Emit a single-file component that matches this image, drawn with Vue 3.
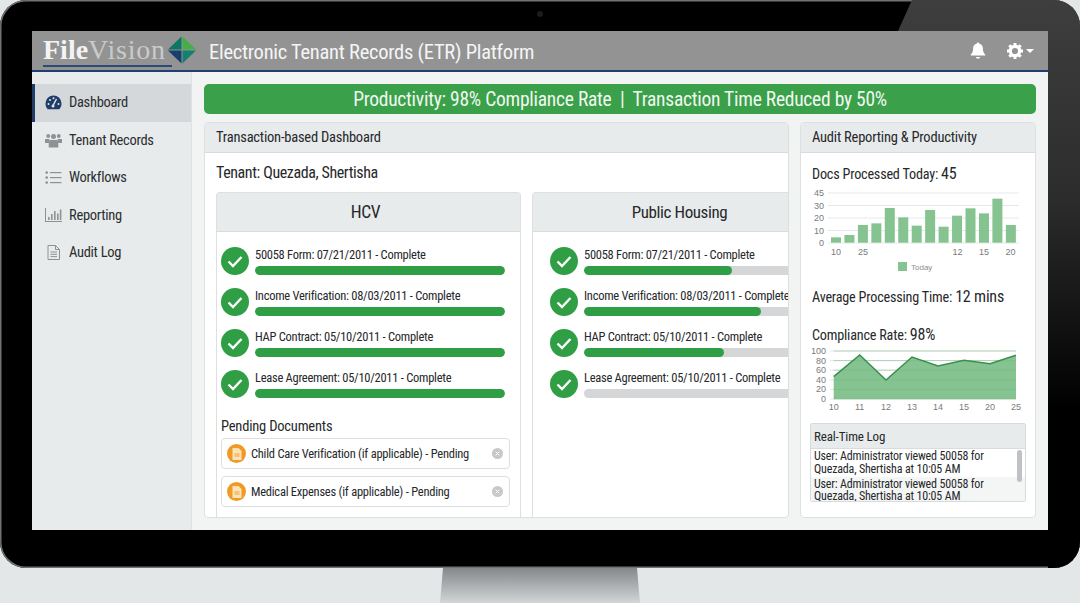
<script setup>
const navItems = [
  { label: 'Dashboard', icon: 'gauge', active: true },
  { label: 'Tenant Records', icon: 'users' },
  { label: 'Workflows', icon: 'list' },
  { label: 'Reporting', icon: 'chart' },
  { label: 'Audit Log', icon: 'doc' },
]
const docs = [
  { label: '50058 Form: 07/21/2011 - Complete', hcv: 100, ph: 58.700 },
  { label: 'Income Verification: 08/03/2011 - Complete', hcv: 100, ph: 70.200 },
  { label: 'HAP Contract: 05/10/2011 - Complete', hcv: 100, ph: 55.600 },
  { label: 'Lease Agreement: 05/10/2011 - Complete', hcv: 100, ph: 0 },
]
const hcvRows = docs.map((d) => ({ label: d.label, pct: d.hcv }))
const phRows = docs.map((d) => ({ label: d.label, pct: d.ph }))
const pending = ['Child Care Verification (if applicable) - Pending', 'Medical Expenses (if applicable) - Pending']
const barTops = [352, 345, 315, 310, 264, 292, 317, 270, 320, 287, 265, 280, 236, 315]
const bars = barTops.map((t, i) => {
  const top = 120 + t / 3 - 188
  return { x: 19 + i * 13.45, y: top, h: 54.7 - top }
})
const barGrid = [{ y: 5, l: '45' }, { y: 17.5, l: '30' }, { y: 30, l: '20' }, { y: 42.5, l: '10' }, { y: 55, l: '0' }]
const barX = [{ x: 24, l: '10' }, { x: 51, l: '25' }, { x: 145.5, l: '12' }, { x: 172, l: '15' }, { x: 198.5, l: '20' }]
const linePts = [[21.7, 29.7], [47.7, 8], [74, 33], [100, 10], [126, 19], [152, 13.3], [178, 16.7], [204, 8.3]]
const line = linePts.map((p) => p.join(',')).join(' ')
const area = `21.7,52 ${line} 204,52`
const lineGrid = [{ y: 4, l: '100' }, { y: 13.6, l: '80' }, { y: 23.2, l: '60' }, { y: 32.8, l: '40' }, { y: 42.4, l: '20' }, { y: 52, l: '0' }]
const lineX = ['10', '11', '12', '13', '14', '15', '20', '25']
</script>

<template>
  <div class="page">
    <div class="bezel">
      <div class="glare"></div>
      <div class="camera"></div>
      <div class="screen">
        <header class="topbar">
          <div class="logo">
            <div class="logo-word"><span class="file">File</span><span class="vision">Vision</span></div>
            <svg class="diamond" width="28" height="28" viewBox="0 0 29 28">
              <polygon points="14,0 14,13.500 0,13.500" fill="#0e7565" />
              <polygon points="15,0 29,13.500 15,13.500" fill="#46ad48" />
              <polygon points="0,14.500 14,14.500 14,28" fill="#173f6e" />
              <polygon points="15,14.500 29,14.500 15,28" fill="#14806f" />
            </svg>
          </div>
          <div class="app-title">Electronic Tenant Records (ETR) Platform</div>
          <div class="top-icons">
            <svg width="16" height="17" viewBox="0 0 16 17" fill="#fff">
              <path d="M8 0.500c.8 0 1.300.6 1.300 1.300 2.400.5 3.600 2.400 3.600 4.800 0 3.400 1 4.600 2.300 6v1H.8v-1c1.300-1.400 2.300-2.600 2.300-6 0-2.400 1.200-4.300 3.600-4.800C6.700 1.100 7.200.5 8 .5z" />
              <path d="M5.800 15h4.400c-.2 1-1.100 1.700-2.200 1.700S6 16 5.800 15z" />
            </svg>
            <div class="gear-wrap">
              <svg width="16" height="16" viewBox="0 0 16 16">
                <circle cx="8" cy="8" r="4.700" fill="none" stroke="#fff" stroke-width="3.200" />
                <g stroke="#fff" stroke-width="3">
                  <path d="M8 0v3M8 13v3M0 8h3M13 8h3M2.300 2.300l2.100 2.100M11.600 11.600l2.100 2.100M2.300 13.700l2.100-2.100M11.600 4.400l2.100-2.100" />
                </g>
              </svg>
              <span class="caret"></span>
            </div>
          </div>
        </header>
        <div class="body">
          <aside class="sidebar">
            <div v-for="item in navItems" :key="item.label" class="nav-item" :class="{ active: item.active }">
              <svg v-if="item.icon === 'gauge'" class="nav-icon" width="17" height="15" viewBox="0 0 17 15">
                <path d="M8.500 0.500a8 8 0 0 1 8 8c0 2.300-.8 4.300-2.200 5.800H2.700C1.300 12.800.5 10.800.5 8.500a8 8 0 0 1 8-8z" fill="#1f3d66" />
                <path d="M8 10.500 11.500 4" stroke="#e3e6e8" stroke-width="1.500" />
                <g fill="#e3e6e8"><circle cx="3.500" cy="9" r="1" /><circle cx="5" cy="5" r="1" /><circle cx="8.500" cy="3.200" r="1" /><circle cx="13.500" cy="9" r="1" /><circle cx="8" cy="11" r="1.500" /></g>
              </svg>
              <svg v-else-if="item.icon === 'users'" class="nav-icon" width="17" height="15" viewBox="0 0 17 15" fill="#8f9295">
                <circle cx="3.200" cy="3" r="1.900" /><circle cx="13.800" cy="3" r="1.900" /><circle cx="8.500" cy="3.500" r="2.500" />
                <path d="M0 6h4.500L3.800 10H0zM12.500 6H17v4h-3.800z" />
                <path d="M4.500 7h8l.8 3v4.500H3.700V10z" />
              </svg>
              <svg v-else-if="item.icon === 'list'" class="nav-icon" width="17" height="13" viewBox="0 0 17 13" fill="#8f9295">
                <rect x="5" y="1" width="11.500" height="1.200" /><rect x="5" y="6" width="11.500" height="1.200" /><rect x="5" y="11" width="11.500" height="1.200" />
                <circle cx="1.700" cy="1.600" r="1.300" /><circle cx="1.700" cy="6.600" r="1.300" /><circle cx="1.700" cy="11.600" r="1.300" />
              </svg>
              <svg v-else-if="item.icon === 'chart'" class="nav-icon" width="17" height="14" viewBox="0 0 17 14" fill="#8f9295">
                <path d="M0 0h1v13h16v1H0z" />
                <rect x="3" y="9" width="1.600" height="3" /><rect x="6" y="6" width="1.600" height="6" /><rect x="9" y="3" width="1.600" height="9" /><rect x="12" y="5.500" width="1.600" height="6.500" /><rect x="14.800" y="1.500" width="1.600" height="10.500" />
              </svg>
              <svg v-else class="nav-icon" width="17" height="15" viewBox="0 0 13 15" fill="none" stroke="#8f9295" stroke-width="1">
                <path d="M1 .5h7.500L12.500 4.500v10H1z" /><path d="M8.500.5v4h4M3.500 7h6.500M3.500 9.300h6.500M3.500 11.600h6.500" />
              </svg>
              <span>{{ item.label }}</span>
            </div>
          </aside>
          <main class="main">
            <div class="banner">Productivity: 98% Compliance Rate&nbsp; |&nbsp; Transaction Time Reduced by 50%</div>
            <div class="columns">
              <section class="card left-card">
                <div class="card-head">Transaction-based Dashboard</div>
                <div class="tenant">Tenant: Quezada, Shertisha</div>
                <div class="programs">
                  <div class="program">
                    <div class="program-head">HCV</div>
                    <div class="rows">
                      <div v-for="r in hcvRows" :key="r.label" class="row">
                        <svg class="check" width="28" height="28" viewBox="0 0 28 28">
                          <circle cx="14" cy="14" r="14" fill="#2f9e44" />
                          <path d="M7.500 14.500l4.500 4.500 8.500-9" fill="none" stroke="#fff" stroke-width="2.400" />
                        </svg>
                        <div class="row-main">
                          <div class="row-label">{{ r.label }}</div>
                          <div class="track"><div class="fill" :style="{ width: r.pct + '%' }"></div></div>
                        </div>
                      </div>
                    </div>
                    <div class="pending-title">Pending Documents</div>
                    <div v-for="p in pending" :key="p" class="pending">
                      <span class="pending-icon">
                        <svg width="10" height="12" viewBox="0 0 10 12">
                          <path d="M.5 0h6L9.500 3v9H.5z" fill="#fbe3b8" />
                          <path d="M2.500 6h5M2.500 8h5" stroke="#f0a030" stroke-width="1" />
                        </svg>
                      </span>
                      <span class="pending-text">{{ p }}</span>
                      <svg class="pending-x" width="11" height="11" viewBox="0 0 11 11">
                        <circle cx="5.500" cy="5.500" r="5.500" fill="#c6c8ca" />
                        <path d="M3.600 3.600l3.800 3.800M7.400 3.600l-3.800 3.800" stroke="#fff" stroke-width="1" />
                      </svg>
                    </div>
                  </div>
                  <div class="program ph">
                    <div class="program-head">Public Housing</div>
                    <div class="rows">
                      <div v-for="r in phRows" :key="r.label" class="row">
                        <svg class="check" width="28" height="28" viewBox="0 0 28 28">
                          <circle cx="14" cy="14" r="14" fill="#2f9e44" />
                          <path d="M7.500 14.500l4.500 4.500 8.500-9" fill="none" stroke="#fff" stroke-width="2.400" />
                        </svg>
                        <div class="row-main">
                          <div class="row-label">{{ r.label }}</div>
                          <div class="track"><div class="fill" :style="{ width: r.pct + '%' }"></div></div>
                        </div>
                      </div>
                    </div>
                  </div>
                </div>
              </section>
              <section class="card right-card">
                <div class="card-head">Audit Reporting &amp; Productivity</div>
                <div class="right-body">
                  <div class="stat">Docs Processed Today: <b>45</b></div>
                  <svg class="chart bar-chart" width="212" height="88" viewBox="0 0 212 88">
                    <g v-for="g in barGrid" :key="g.l">
                      <line x1="16" :y1="g.y" x2="207" :y2="g.y" stroke="#e6e8e8" stroke-width="1" />
                      <text x="12" :y="g.y + 3" text-anchor="end" class="tick">{{ g.l }}</text>
                    </g>
                    <rect v-for="(b, i) in bars" :key="i" :x="b.x" :y="b.y" width="10" :height="b.h" fill="#85c391" />
                    <text v-for="t in barX" :key="t.l" :x="t.x" y="67" text-anchor="middle" class="tick">{{ t.l }}</text>
                    <rect x="86" y="74" width="9" height="9" fill="#85c391" />
                    <text x="99" y="82" class="legend">Today</text>
                  </svg>
                  <div class="stat avg">Average Processing Time: <b>12 mins</b></div>
                  <div class="stat rate">Compliance Rate: <b>98%</b></div>
                  <svg class="chart line-chart" width="212" height="66" viewBox="0 0 212 66">
                    <g v-for="g in lineGrid" :key="g.l">
                      <line x1="18" :y1="g.y" x2="204" :y2="g.y" stroke="#e6e8e8" stroke-width="1" />
                      <text x="14" :y="g.y + 3" text-anchor="end" class="tick">{{ g.l }}</text>
                    </g>
                    <polygon :points="area" fill="#85c391" />
                    <g v-for="g in lineGrid" :key="'o' + g.l">
                      <line x1="21.700" :y1="g.y" x2="204" :y2="g.y" stroke="#78b886" stroke-width="0.500" />
                    </g>
                    <polyline :points="line" fill="none" stroke="#3b8f4d" stroke-width="1.500" />
                    <text v-for="(t, i) in lineX" :key="t" :x="linePts[i][0]" y="63" text-anchor="middle" class="tick">{{ t }}</text>
                  </svg>
                  <div class="log">
                    <div class="log-head">Real-Time Log</div>
                    <div class="log-body">
                      <div class="log-entry">User: Administrator viewed 50058 for<br />Quezada, Shertisha at 10:05 AM</div>
                      <div class="log-entry alt">User: Administrator viewed 50058 for<br />Quezada, Shertisha at 10:05 AM</div>
                      <div class="scroll-thumb"></div>
                    </div>
                  </div>
                </div>
              </section>
            </div>
          </main>
        </div>
      </div>
    </div>
    <div class="stand"></div>
  </div>
</template>

<style>
html, body { margin: 0; background: #e4e7e8; }
</style>

<style scoped>
.page {
  width: 1080px;
  height: 603px;
  overflow: hidden;
  background: #e4e7e8;
  font-family: Roboto, "Liberation Sans", sans-serif;
  font-stretch: 75%;
  color: #26282a;
}
.bezel {
  position: relative;
  box-sizing: border-box;
  height: 568px;
  padding: 31px 32px 38px;
  background: #000;
  border-radius: 26px;
  box-shadow: inset 0 0 0 1.500px #6f7173;
  overflow: hidden;
}
.glare {
  position: absolute;
  top: 0;
  right: 0;
  bottom: 0;
  width: 182px;
  background: linear-gradient(180deg, #3e3e3e 0%, #2c2c2c 35%, #000 72%);
  clip-path: polygon(14px 0, 100% 0, 100% 100%, 150px 100%, 150px 31px, 0 31px);
}
.camera {
  position: absolute;
  left: 537px;
  top: 11px;
  width: 6px;
  height: 6px;
  border-radius: 50%;
  background: #1c1c1c;
}
.screen {
  position: relative;
  height: 499px;
  display: flex;
  flex-direction: column;
  background: #f2f4f4;
}
.topbar {
  height: 39px;
  flex: none;
  display: flex;
  align-items: center;
  padding-left: 11px;
  background: #939393;
  border-bottom: 2px solid #1f3f6e;
}
.logo { display: flex; align-items: center; width: 166px; flex: none; }
.logo-word {
  font-family: "Liberation Serif", serif;
  font-stretch: normal;
  font-size: 28px;
  line-height: 30px;
  border-bottom: 2px solid #2a4a78;
  width: 129px;
  margin-top: 1px;
  white-space: nowrap;
}
.file { color: #f4f4f4; font-weight: 700; }
.vision { color: #c9cbcb; font-weight: 400; letter-spacing: 0.800px; }
.diamond { flex: none; margin: -1px 0 0 -4px; }
.app-title { color: #f5f5f5; font-size: 20.500px; letter-spacing: -0.250px; white-space: nowrap; margin-top: 2px; }
.top-icons { margin-left: auto; display: flex; align-items: center; gap: 21px; padding-right: 14px; }
.gear-wrap { display: flex; align-items: center; gap: 3px; }
.caret { width: 0; height: 0; border: 4px solid transparent; border-top-color: #fff; border-bottom: 0; }
.body { flex: 1; display: flex; min-height: 0; }
.sidebar {
  width: 160px;
  flex: none;
  box-sizing: border-box;
  padding-top: 12px;
  background: #e8ebec;
  border-right: 1px solid #dfe2e3;
}
.nav-item {
  height: 37.500px;
  display: flex;
  align-items: center;
  box-sizing: border-box;
  padding-left: 13px;
  font-size: 14.500px;
  letter-spacing: -0.300px;
  color: #2b2d30;
}
.nav-item.active { background: #d4d8db; border-left: 3px solid #1f3d66; padding-left: 10px; }
.nav-icon { width: 17px; margin-right: 7px; flex: none; }
.main {
  flex: 1;
  min-width: 0;
  box-sizing: border-box;
  padding: 12px;
  display: flex;
  flex-direction: column;
  gap: 8px;
}
.banner {
  height: 30px;
  flex: none;
  display: flex;
  align-items: center;
  justify-content: center;
  background: #3aa049;
  color: #f1f8f1;
  border-radius: 5px;
  font-size: 19.500px;
  letter-spacing: -0.250px;
  white-space: pre;
}
.columns { flex: 1; display: flex; gap: 11px; min-height: 0; }
.card {
  background: #fff;
  border: 1px solid #dde0e1;
  border-radius: 4px;
  box-sizing: border-box;
  overflow: hidden;
  display: flex;
  flex-direction: column;
}
.left-card { width: 585px; flex: none; }
.right-card { width: 236px; flex: none; }
.card-head {
  height: 29px;
  flex: none;
  display: flex;
  align-items: center;
  padding-left: 11px;
  background: #e8ebec;
  border-bottom: 1px solid #d9dcdd;
  font-size: 14.500px;
  letter-spacing: -0.220px;
  white-space: nowrap;
}
.tenant { font-size: 16px; letter-spacing: -0.400px; padding: 10px 11px 0; height: 29px; flex: none; }
.programs { flex: 1; display: flex; gap: 11px; padding-left: 11px; min-height: 0; }
.program {
  width: 305px;
  flex: none;
  box-sizing: border-box;
  border: 1px solid #dde0e1;
  border-bottom: 0;
  border-radius: 4px 4px 0 0;
  padding: 0 15px 0 4px;
}
.program.ph { padding-left: 17px; padding-right: 0; }
.program-head {
  height: 38px;
  margin: 0 -15px 0 -4px;
  padding-right: 6px;
  display: flex;
  align-items: center;
  justify-content: center;
  background: #e8ebec;
  border-bottom: 1px solid #d9dcdd;
  font-size: 17.500px;
  letter-spacing: -0.300px;
}
.ph .program-head { margin: 0 0 0 -17px; padding-right: 10px; font-size: 17px; letter-spacing: -0.400px; }
.rows { padding-top: 15px; display: flex; flex-direction: column; gap: 13px; }
.row { display: flex; align-items: center; height: 28px; gap: 6px; }
.check { flex: none; }
.row-main { flex: 1; min-width: 0; }
.row-label { font-size: 12.500px; letter-spacing: -0.270px; line-height: 16px; height: 19px; white-space: nowrap; margin-top: -1px; }
.track { height: 9px; background: #d4d6d8; border-radius: 5px; overflow: hidden; }
.fill { height: 100%; background: #2f9e44; border-radius: 5px; }
.pending-title { font-size: 14.500px; letter-spacing: -0.200px; margin-top: 17px; height: 23px; line-height: 24px; }
.pending {
  height: 31px;
  box-sizing: border-box;
  border: 1px solid #dcdfe0;
  border-radius: 4px;
  margin: 0 -5px 7px 0;
  display: flex;
  align-items: center;
  padding: 0 6px 0 5px;
}
.pending-icon {
  width: 19px;
  height: 19px;
  flex: none;
  border-radius: 50%;
  background: #f09a26;
  display: flex;
  align-items: center;
  justify-content: center;
  margin-right: 5px;
}
.pending-text { font-size: 12.500px; letter-spacing: -0.250px; flex: 1; white-space: nowrap; }
.pending-x { flex: none; }
.right-body { flex: 1; padding: 0 10px 0 11px; min-height: 0; }
.stat { font-size: 14.200px; letter-spacing: -0.200px; white-space: nowrap; }
.stat b { font-weight: 400; font-size: 16px; }
.right-body > .stat:first-child { margin-top: 11px; }
.chart { display: block; }
.bar-chart { margin-top: 5px; }
.avg { margin-top: 11px; }
.rate { margin-top: 19px; }
.line-chart { margin-top: 3px; }
.tick { font-size: 9px; fill: #777a7c; font-family: "Liberation Sans", sans-serif; }
.legend { font-size: 8px; fill: #8a8d8f; font-family: "Liberation Sans", sans-serif; }
.log {
  margin-top: 10px;
  margin-left: -2px;
  width: 216px;
  height: 79px;
  box-sizing: border-box;
  border: 1px solid #d8dbdc;
  border-radius: 2px;
  overflow: hidden;
}
.log-head {
  height: 24px;
  background: #e8ebec;
  border-bottom: 1px solid #d9dcdd;
  display: flex;
  align-items: center;
  padding-left: 3px;
  font-size: 13px;
  letter-spacing: -0.150px;
}
.log-body { position: relative; padding-left: 3px; background: #fff; }
.log-entry { font-size: 12px; letter-spacing: -0.170px; line-height: 12.800px; padding: 1px 0; }
.log-entry.alt { background: #f4f6f6; margin-left: -3px; padding-left: 3px; }
.scroll-thumb {
  position: absolute;
  top: 1px;
  right: 3px;
  width: 5px;
  height: 32px;
  border-radius: 3px;
  background: #bfc2c4;
}
.stand {
  width: 200px;
  height: 35px;
  margin: 0 auto;
  background: linear-gradient(180deg, #85888a 0%, #a8abad 45%, #d3d6d7 100%);
  clip-path: polygon(3px 0, 197px 0, 200px 100%, 0 100%);
}
</style>
